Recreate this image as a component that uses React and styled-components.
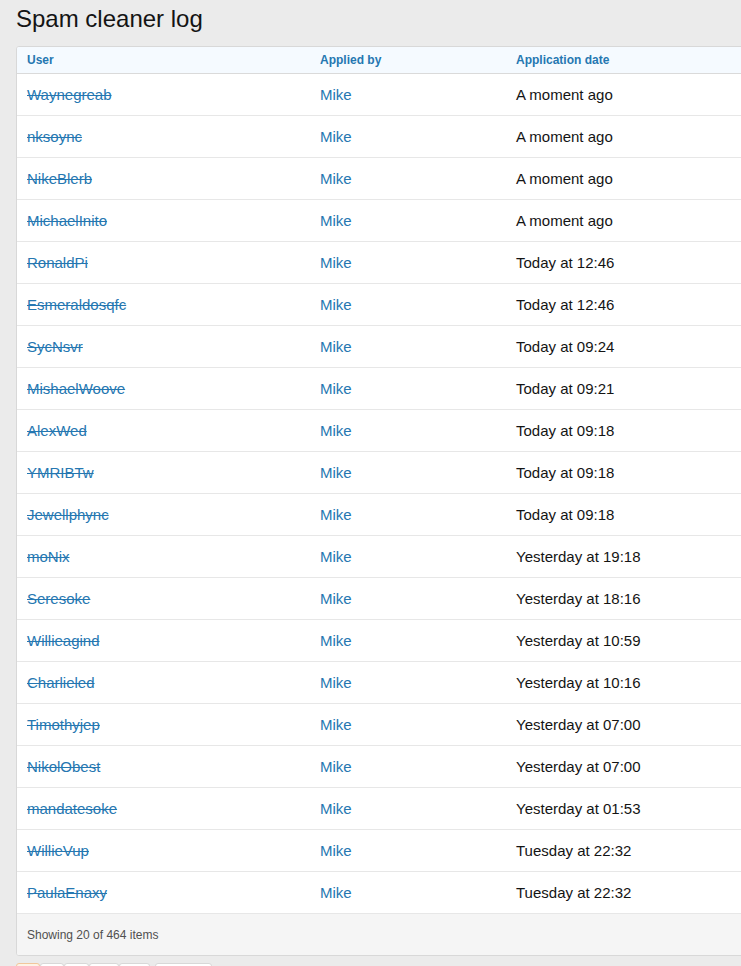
import React from "react";
import styled, { createGlobalStyle } from "styled-components";

const Global = createGlobalStyle`
  html, body { margin: 0; padding: 0; background: #ebebeb; overflow: hidden; }
  body { font-family: "Liberation Sans", Arial, sans-serif; color: #141414; }
`;

const Page = styled.div`
  padding: 4px 0 0 16px;
  width: 780px;
`;

const Title = styled.h1`
  margin: 0 0 12px 0;
  font-size: 24px;
  font-weight: 400;
  line-height: 30px;
  color: #141414;
`;

const Block = styled.div`
  background: #fff;
  border: 1px solid #d8d8d8;
  border-radius: 3px;
  overflow: hidden;
`;

const Table = styled.div`
  display: grid;
  grid-template-columns: 293px 196px 1fr;
`;

const HeadCell = styled.div`
  background: #f5faff;
  border-bottom: 1px solid #dadada;
  height: 26px;
  padding: 0 10px;
  display: flex;
  align-items: center;
  font-size: 12px;
  font-weight: 700;
  color: #2577b1;
`;

const Cell = styled.div`
  height: 41px;
  border-bottom: 1px solid #e7e7e7;
  padding: 0 10px;
  display: flex;
  align-items: center;
  font-size: 15px;
  color: ${(p) => (p.$link ? "#2577b1" : "#141414")};
  text-decoration: ${(p) => (p.$strike ? "line-through" : "none")};
`;

const Footer = styled.div`
  background: #f5f5f5;
  height: 41px;
  padding: 0 10px;
  display: flex;
  align-items: center;
  font-size: 12px;
  color: #505050;
`;

const Pager = styled.div`
  display: flex;
  gap: 0;
  margin-top: 7px;
`;

const PageBtn = styled.div`
  width: ${(p) => p.$w}px;
  height: 26px;
  box-sizing: border-box;
  border: 1px solid ${(p) => (p.$active ? "#f1c79c" : "#d8d8d8")};
  background: ${(p) => (p.$active ? "#fef3e6" : "#fff")};
  border-radius: 3px;
  margin-left: ${(p) => p.$ml || 0}px;
`;

const rows = [
  ["Waynegreab", "A moment ago"],
  ["nksoync", "A moment ago"],
  ["NikeBlerb", "A moment ago"],
  ["MichaelInito", "A moment ago"],
  ["RonaldPi", "Today at 12:46"],
  ["Esmeraldosqfc", "Today at 12:46"],
  ["SycNsvr", "Today at 09:24"],
  ["MishaelWoove", "Today at 09:21"],
  ["AlexWed", "Today at 09:18"],
  ["YMRIBTw", "Today at 09:18"],
  ["Jewellphync", "Today at 09:18"],
  ["moNix", "Yesterday at 19:18"],
  ["Seresoke", "Yesterday at 18:16"],
  ["Willieagind", "Yesterday at 10:59"],
  ["Charlieled", "Yesterday at 10:16"],
  ["Timothyjep", "Yesterday at 07:00"],
  ["NikolObest", "Yesterday at 07:00"],
  ["mandatesoke", "Yesterday at 01:53"],
  ["WillieVup", "Tuesday at 22:32"],
  ["PaulaEnaxy", "Tuesday at 22:32"],
];

export default function App() {
  return (
    <Page>
      <Global />
      <Title>Spam cleaner log</Title>
      <Block>
        <Table>
          <HeadCell>User</HeadCell>
          <HeadCell>Applied by</HeadCell>
          <HeadCell>Application date</HeadCell>
          {rows.map(([u, d]) => (
            <React.Fragment key={u}>
              <Cell $link $strike>{u}</Cell>
              <Cell $link>Mike</Cell>
              <Cell>{d}</Cell>
            </React.Fragment>
          ))}
        </Table>
        <Footer>Showing 20 of 464 items</Footer>
      </Block>
      <Pager>
        <PageBtn $w={24} $active />
        <PageBtn $w={24} />
        <PageBtn $w={25} />
        <PageBtn $w={30} />
        <PageBtn $w={31} />
        <PageBtn $w={57} $ml={5} />
      </Pager>
    </Page>
  );
}
